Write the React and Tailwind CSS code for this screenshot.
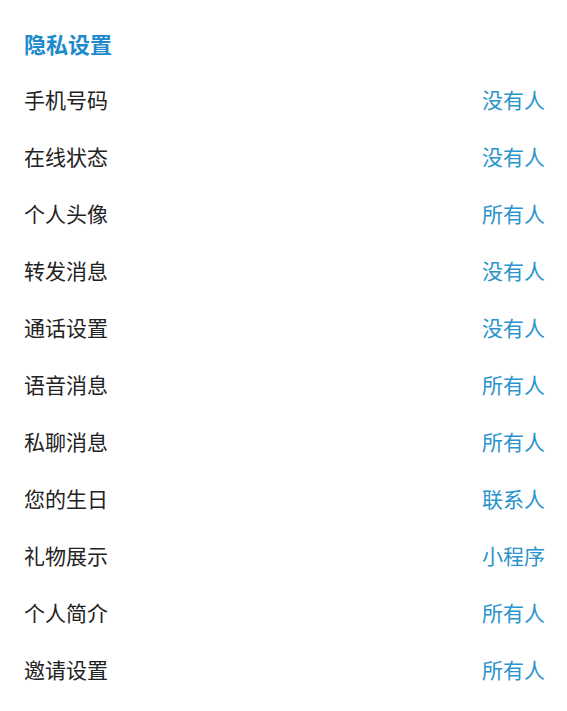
import React from 'react'

const rows = [
  ['手机号码', '没有人'],
  ['在线状态', '没有人'],
  ['个人头像', '所有人'],
  ['转发消息', '没有人'],
  ['通话设置', '没有人'],
  ['语音消息', '所有人'],
  ['私聊消息', '所有人'],
  ['您的生日', '联系人'],
  ['礼物展示', '小程序'],
  ['个人简介', '所有人'],
  ['邀请设置', '所有人'],
]

export default function App() {
  return (
    <div className="min-h-screen bg-white pt-[15px] pl-6 pr-[22px] font-['Noto_Sans_CJK_SC',sans-serif]">
      <div className="h-[56px] flex items-center text-[22px] font-bold text-[#1e8acb]">隐私设置</div>
      {rows.map(([label, value]) => (
        <div key={label} className="h-[57px] flex items-center justify-between text-[21px]">
          <span className="text-[#222222]">{label}</span>
          <span className="text-[#2a94cc]">{value}</span>
        </div>
      ))}
    </div>
  )
}
